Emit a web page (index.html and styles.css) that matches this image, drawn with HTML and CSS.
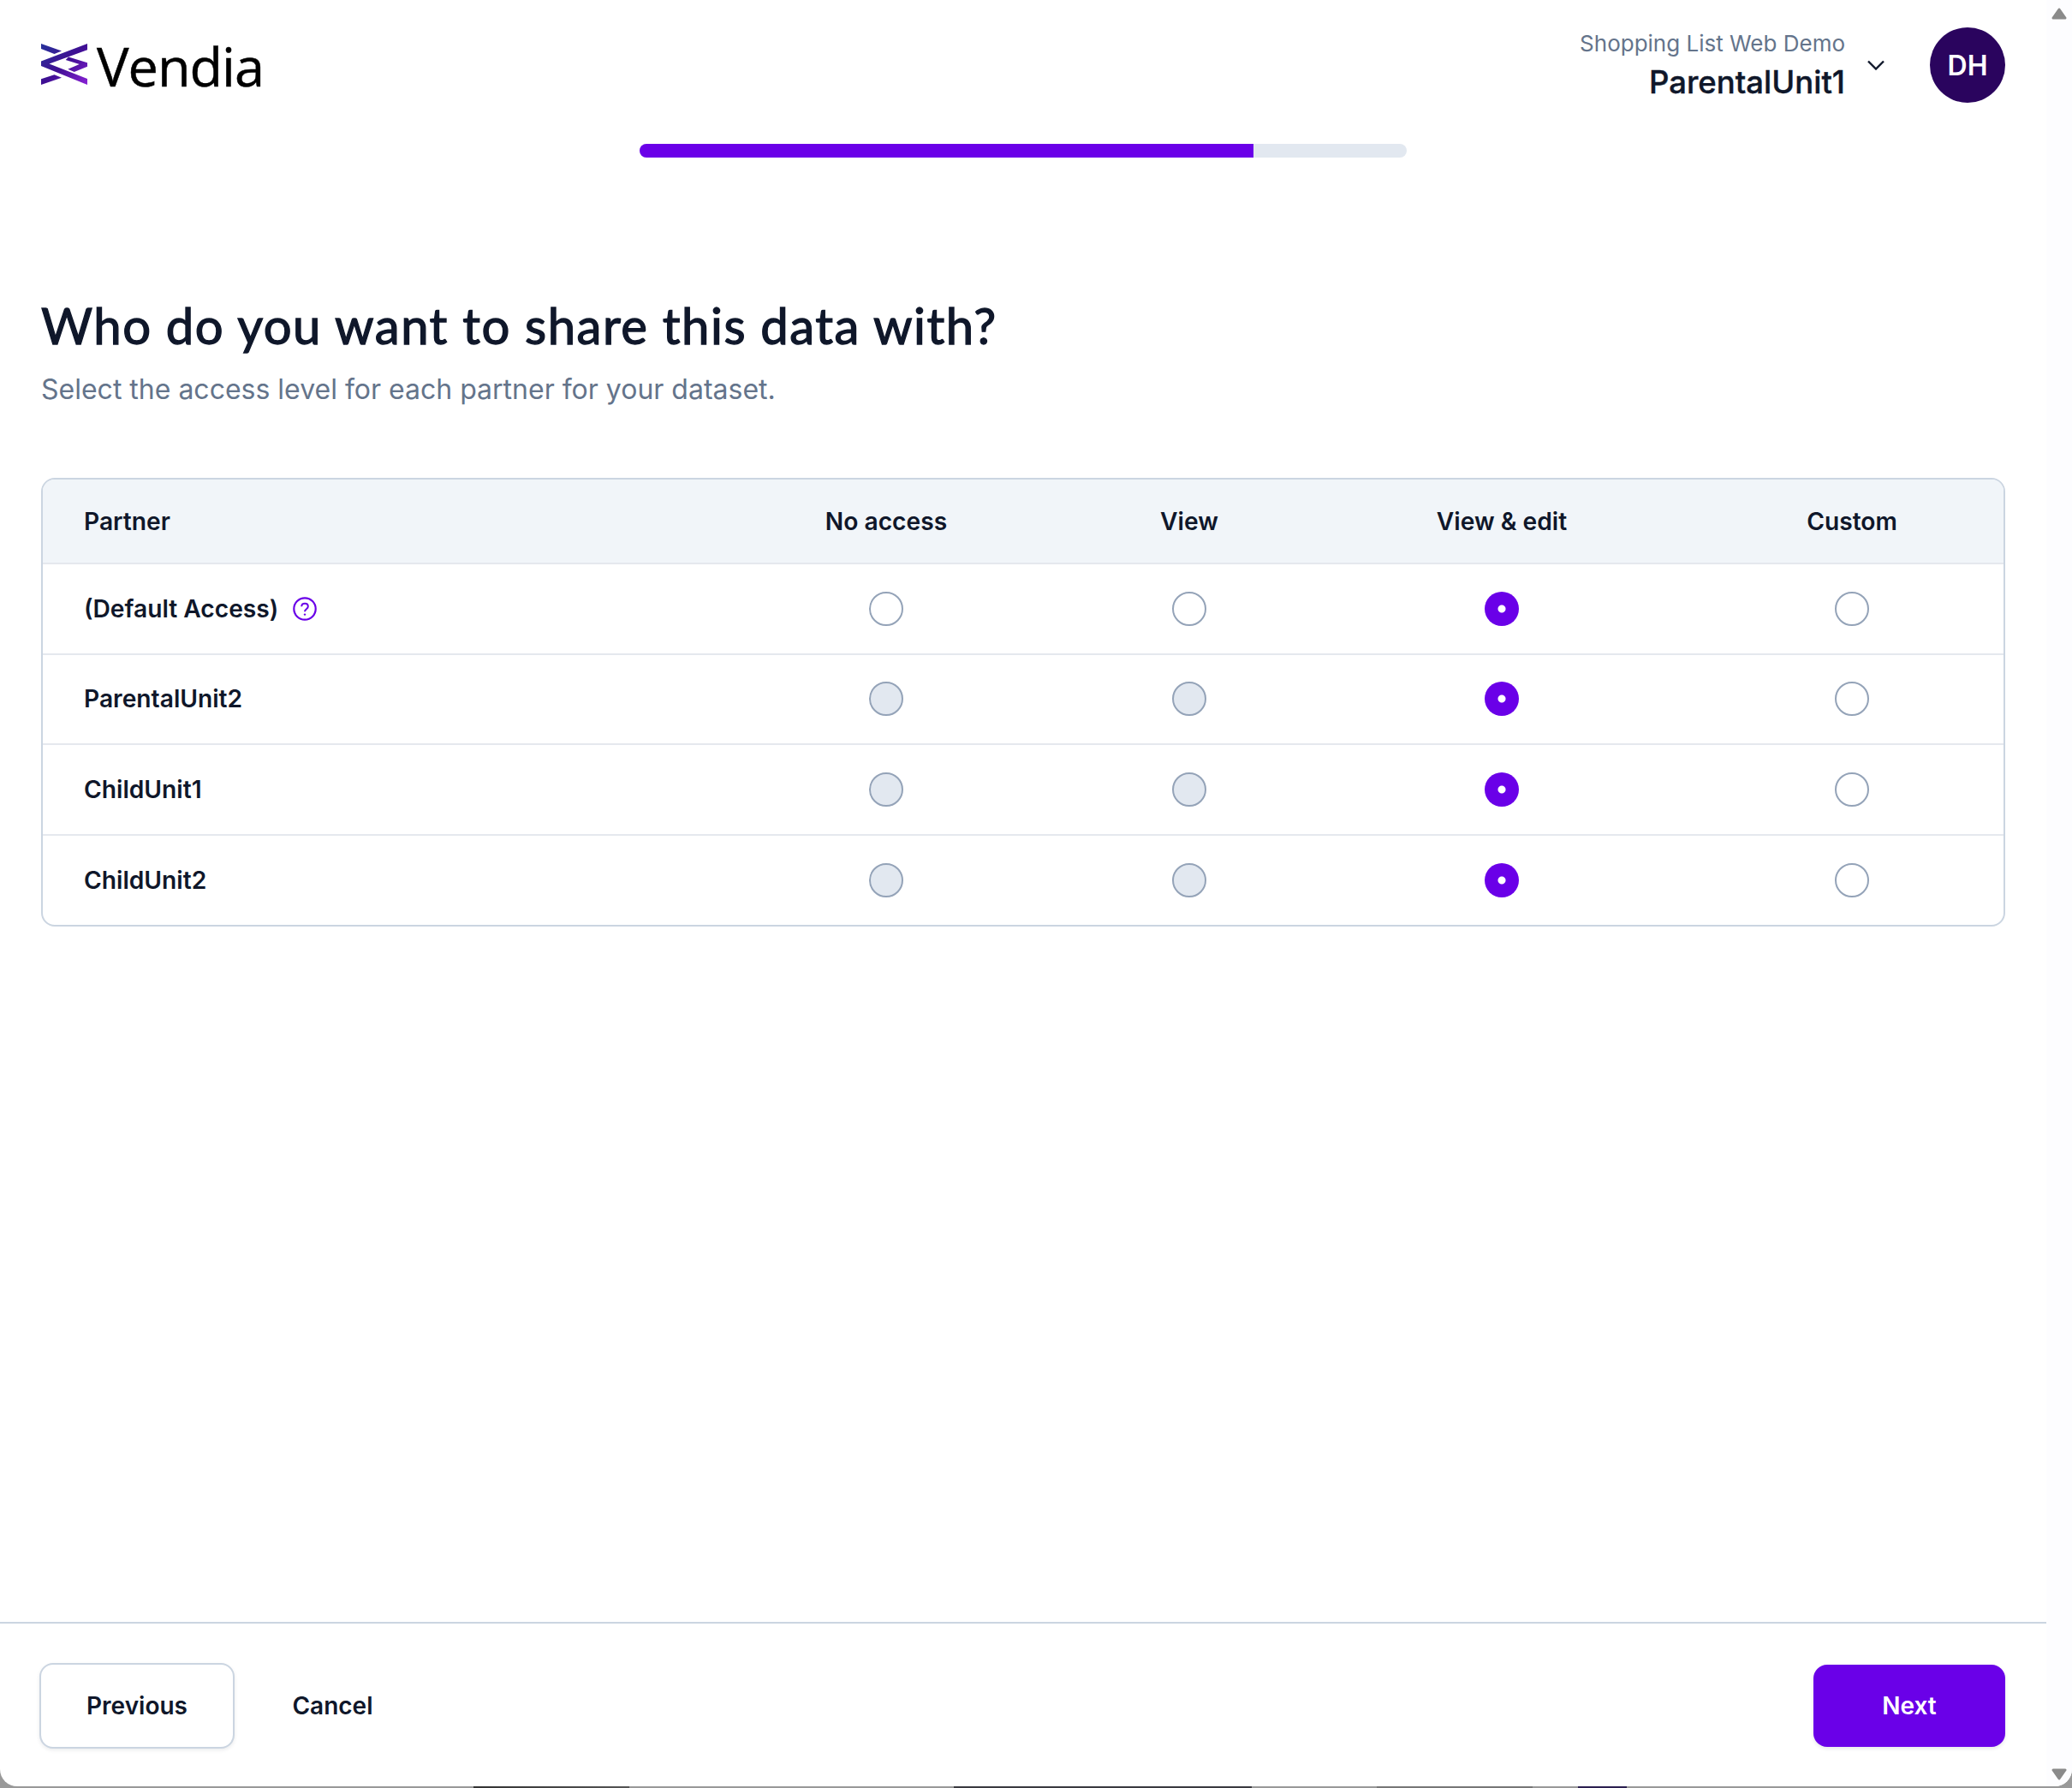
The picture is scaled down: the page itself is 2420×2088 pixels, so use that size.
FILE: index.html
```html
<!DOCTYPE html>
<html lang="en">
<head>
<meta charset="utf-8">
<title>Vendia – Share data</title>
<link rel="stylesheet" href="styles.css">
</head>
<body>
<div class="window">
  <div class="content">
    <header class="topbar">
      <div class="brand">
        <svg class="logo" viewBox="0 0 54 48" aria-hidden="true">
          <defs>
            <linearGradient id="lg" x1="0" y1="0" x2="1" y2="1">
              <stop offset="0" stop-color="#26329a"/>
              <stop offset=".5" stop-color="#3f0f93"/>
              <stop offset="1" stop-color="#8a22d6"/>
            </linearGradient>
          </defs>
          <path fill="url(#lg)" d="M0 0 L24 8.5 L15.5 12 L0 6 Z M54 0 V7.3 L9.5 23.5 L54 41 V48 L0 26 V20.5 Z M32 15.5 L54 22.3 V26.7 L38.7 33 L31.3 29.7 L44.7 24 L28.7 19 Z M15.5 36.3 L24 39.7 L0 48 V41.3 Z"/>
        </svg>
        <span class="brand-name">Vendia</span>
      </div>
      <div class="account">
        <div class="account-text">
          <div class="account-app">Shopping List Web Demo</div>
          <div class="account-node">ParentalUnit1</div>
        </div>
        <svg class="chevron" viewBox="0 0 20 12" aria-hidden="true"><path d="M1 1.5 L10 10.5 L19 1.5" fill="none" stroke="#0f172a" stroke-width="2.4"/></svg>
        <div class="avatar">DH</div>
      </div>
    </header>

    <div class="progress"><div class="progress-fill"></div></div>

    <main class="main">
      <h1 class="title">Who do you want to share this data with?</h1>
      <p class="subtitle">Select the access level for each partner for your dataset.</p>

      <div class="table-wrap">
        <table class="access">
          <colgroup>
            <col class="c1"><col class="c2"><col class="c3"><col class="c4"><col class="c5">
          </colgroup>
          <thead>
            <tr><th class="name">Partner</th><th>No access</th><th>View</th><th>View &amp; edit</th><th>Custom</th></tr>
          </thead>
          <tbody>
            <tr>
              <td class="name"><span class="name-inner">(Default Access)
                <svg class="help" viewBox="0 0 28 28" aria-hidden="true"><circle cx="14" cy="14" r="12.7" fill="none" stroke="#6a00e8" stroke-width="2.2"/><path d="M10.2 11.2 C10.4 6.6 17.8 6.6 17.8 11.2 C17.8 14.2 14 14.2 14 17.2" fill="none" stroke="#6a00e8" stroke-width="2"/><circle cx="14" cy="20.6" r="1.2" fill="#6a00e8"/></svg>
              </span></td>
              <td><span class="radio"></span></td><td><span class="radio"></span></td><td><span class="radio on"></span></td><td><span class="radio"></span></td>
            </tr>
            <tr>
              <td class="name">ParentalUnit2</td>
              <td><span class="radio off"></span></td><td><span class="radio off"></span></td><td><span class="radio on"></span></td><td><span class="radio"></span></td>
            </tr>
            <tr>
              <td class="name">ChildUnit1</td>
              <td><span class="radio off"></span></td><td><span class="radio off"></span></td><td><span class="radio on"></span></td><td><span class="radio"></span></td>
            </tr>
            <tr>
              <td class="name">ChildUnit2</td>
              <td><span class="radio off"></span></td><td><span class="radio off"></span></td><td><span class="radio on"></span></td><td><span class="radio"></span></td>
            </tr>
          </tbody>
        </table>
      </div>
    </main>

    <footer class="footer">
      <div class="footer-left">
        <button class="btn btn-outline">Previous</button>
        <button class="btn btn-ghost">Cancel</button>
      </div>
      <button class="btn btn-primary">Next</button>
    </footer>
  </div>
  <div class="scrollbar">
    <svg class="arrow" viewBox="0 0 18 14" aria-hidden="true"><path d="M9 2 L16 12 H2 Z" fill="#8a8a8a" stroke="#8a8a8a" stroke-width="3" stroke-linejoin="round"/></svg>
    <svg class="arrow" viewBox="0 0 18 14" aria-hidden="true"><path d="M9 12 L16 2 H2 Z" fill="#8a8a8a" stroke="#8a8a8a" stroke-width="3" stroke-linejoin="round"/></svg>
  </div>
</div>
</body>
</html>
```
FILE: styles.css
```css
* { box-sizing: border-box; }
html, body { margin: 0; padding: 0; }
body {
  width: 2420px;
  height: 2088px;
  overflow: hidden;
  font-family: Inter, "Liberation Sans", sans-serif;
  color: #0f172a;
  background: linear-gradient(90deg,
    #999 0, #999 553px, #333 553px, #555 735px, #999 735px,
    #999 1114px, #3a3a40 1114px, #3a3a40 1462px, #999 1462px,
    #999 1608px, #777 1608px, #777 1790px, #999 1790px,
    #999 1843px, #2c2050 1843px, #2c2050 1900px, #999 1900px);
}
.window {
  height: 2086px;
  display: flex;
  background: #fff;
  border-radius: 0 0 20px 20px;
  overflow: hidden;
}
.content {
  width: 2390px;
  display: flex;
  flex-direction: column;
}
.topbar {
  height: 168px;
  padding: 32px 48px 0 48px;
  display: flex;
  justify-content: space-between;
  align-items: flex-start;
}
.brand { display: flex; align-items: center; gap: 11px; height: 88px; }
.logo { width: 54px; height: 48px; display: block; margin-top: -2px; }
.brand-name {
  font-family: "Open Sans", "Noto Sans", sans-serif;
  font-size: 63px;
  font-weight: 500;
  letter-spacing: -1px;
  -webkit-text-stroke: .5px #000;
  line-height: 1;
  color: #000;
}
.account { display: flex; align-items: center; }
.account-text { text-align: right; }
.account-app { font-size: 26px; line-height: 32px; color: #64748b; margin-top: 2px; }
.account-node { font-size: 36.5px; font-weight: 500; line-height: 46px; margin-top: 6px; color: #0f172a; -webkit-text-stroke: .4px #0f172a; }
.chevron { width: 20px; height: 12px; margin: 0 53px 0 26px; }
.avatar {
  width: 88px;
  height: 88px;
  border-radius: 50%;
  background: #2a045e;
  color: #fff;
  font-size: 32px;
  font-weight: 600;
  display: flex;
  align-items: center;
  justify-content: center;
}
.progress {
  width: 896px;
  height: 16px;
  margin-left: 747px;
  border-radius: 8px;
  background: #e2e8f0;
  overflow: hidden;
}
.progress-fill { width: 717px; height: 100%; background: #6a00e8; }
.main { flex: 1; padding: 0 48px; }
.title {
  font-family: Lato, "Noto Sans", sans-serif;
  font-weight: 400;
  font-size: 58px;
  letter-spacing: 1.5px;
  -webkit-text-stroke: 1.3px #0f172a;
  line-height: 72px;
  margin: 160px 0 0;
  color: #0f172a;
}
.subtitle { margin: 18px 0 0; font-size: 32px; line-height: 42px; color: #64748b; }
.table-wrap {
  margin-top: 82px;
  border: 2px solid #cbd5e1;
  border-radius: 16px;
  overflow: hidden;
  width: 2294px;
}
.access { width: 100%; border-collapse: collapse; table-layout: fixed; }
.c1 { width: 764px; } .c2 { width: 442px; } .c3 { width: 266px; } .c4 { width: 464px; } .c5 { width: 354px; }
.access th, .access td { text-align: center; font-size: 28.2px; font-weight: 600; padding: 0; }
.access th { height: 98px; background: #f1f5f9; }
.access td { height: 105.6px; border-top: 2px solid #e5e8ee; }
.access .name { text-align: left; padding-left: 48px; }
.name-inner { display: inline-flex; align-items: center; gap: 17px; }
.help { width: 28px; height: 28px; }
.radio {
  display: inline-block;
  width: 40px;
  height: 40px;
  border-radius: 50%;
  border: 2px solid #94a3b8;
  background: #fff;
  vertical-align: middle;
}
.radio.off { background: #e2e8f0; }
.radio.on {
  border: none;
  background: radial-gradient(circle, #fff 0, #fff 4px, #6a00e8 5px);
}
.footer {
  height: 192px;
  border-top: 2px solid #cbd5e1;
  padding: 46px 48px 0 46px;
  display: flex;
  justify-content: space-between;
  align-items: flex-start;
}
.footer-left { display: flex; align-items: center; gap: 47px; }
.btn {
  font-family: Inter, "Liberation Sans", sans-serif;
  font-size: 28px;
  font-weight: 600;
  border-radius: 16px;
  height: 96px;
  cursor: pointer;
}
.btn-outline {
  width: 228px;
  height: 100px;
  background: #fff;
  color: #0f172a;
  border: 2px solid #cbd5e1;
  box-shadow: 0 2px 4px rgba(15, 23, 42, .08);
}
.btn-ghost { width: 135px; background: none; border: none; color: #0f172a; padding: 0; }
.btn-primary {
  width: 224px;
  margin-top: 2px;
  background: #6a00e8;
  color: #fff;
  border: none;
  box-shadow: 0 2px 4px rgba(15, 23, 42, .1);
}
.scrollbar {
  width: 30px;
  background: #fdfdff;
  display: flex;
  flex-direction: column;
  justify-content: space-between;
  align-items: center;
  padding: 9px 0 7px;
}
.arrow { width: 18px; height: 14px; display: block; }
```
